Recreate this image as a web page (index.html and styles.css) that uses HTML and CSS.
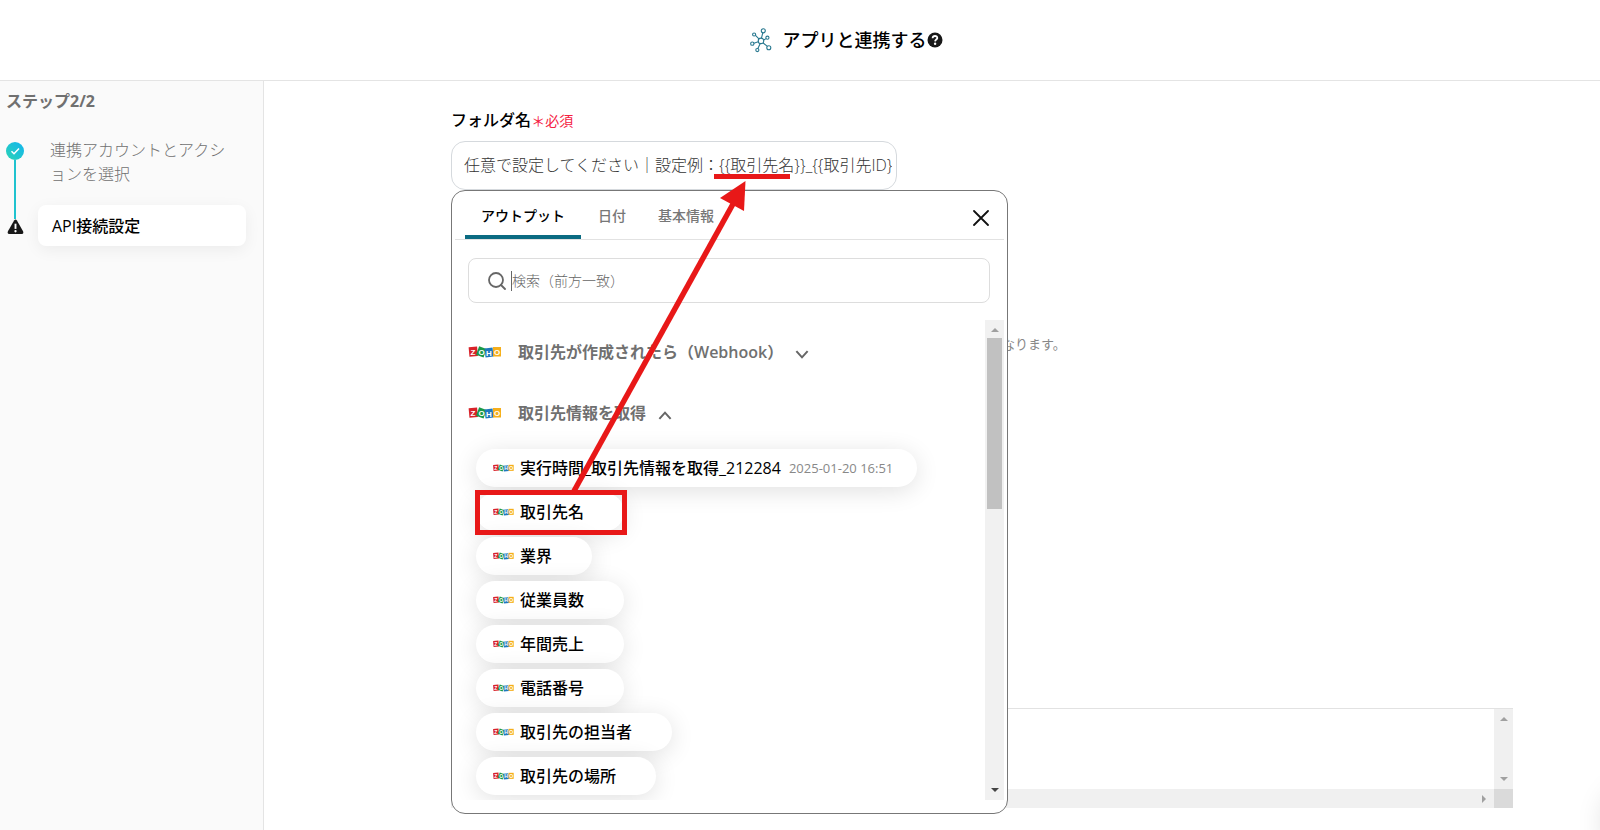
FILE: index.html
```html
<!DOCTYPE html>
<html lang="ja">
<head>
<meta charset="utf-8">
<meta name="viewport" content="width=device-width, initial-scale=1">
<title>アプリと連携する</title>
<link rel="stylesheet" href="styles.css">
</head>
<body>
<svg class="defs" aria-hidden="true">
  <symbol id="zoho" viewBox="0 0 66 24">
    <rect x="1" y="2" width="17" height="19" fill="#d8232a" transform="rotate(-5 9 11)"/>
    <rect x="18" y="3" width="16" height="18" fill="#1a9a48" transform="rotate(20 26 11)"/>
    <rect x="33" y="4" width="16" height="18" fill="#1e78bd" transform="rotate(-6 41 12)"/>
    <rect x="49" y="2" width="16" height="19" fill="#f5ae1b"/>
    <g class="logo-letters">
      <text x="9" y="17">Z</text><text x="26" y="18">O</text><text x="41" y="19">H</text><text x="57" y="18">O</text>
    </g>
  </symbol>
  <symbol id="tri-up" viewBox="0 0 8 8"><path d="M0 6L4 2L8 6Z" fill="currentColor"/></symbol>
  <symbol id="tri-down" viewBox="0 0 8 8"><path d="M0 2L4 6L8 2Z" fill="currentColor"/></symbol>
  <symbol id="tri-right" viewBox="0 0 8 8"><path d="M2 0L6 4L2 8Z" fill="currentColor"/></symbol>
</svg>

<header class="header">
  <svg class="header-icon" viewBox="0 0 24 26" aria-hidden="true">
    <g fill="none" stroke="#28788f" stroke-width="1.2">
      <circle cx="12" cy="14" r="3"/>
      <circle cx="14.500" cy="3" r="2.200"/><circle cx="4.500" cy="7" r="1.700"/>
      <circle cx="19" cy="10.500" r="1.700"/><circle cx="2.500" cy="17" r="1.800"/>
      <circle cx="8" cy="24" r="1.700"/><circle cx="20.500" cy="21.500" r="2.200"/>
      <path d="M12.500 11L14 5M6 8L10 12M15 13L17.500 11.500M9 15L4.200 16.500M11 17L8.500 22.500M14 16L19 20"/>
    </g>
  </svg>
  <h1 class="header-title">アプリと連携する</h1>
  <button class="help" type="button" aria-label="ヘルプ">
    <svg viewBox="0 0 16 16" aria-hidden="true"><circle cx="8" cy="8" r="7.500" fill="#181818"/><path d="M5.600 6.200C5.800 3.200 10.400 3.300 10.300 6.100C10.200 7.600 8.200 7.600 8.100 9.400" fill="none" stroke="#fff" stroke-width="1.800"/><circle cx="8.100" cy="11.800" r="1.200" fill="#fff"/></svg>
  </button>
</header>

<div class="layout">
  <aside class="sidebar">
    <h2 class="step-count">ステップ2/2</h2>
    <div class="steps">
      <div class="rail" aria-hidden="true">
        <svg class="check" viewBox="0 0 18 18"><defs><linearGradient id="g" x1="0" y1="1" x2="1" y2="0"><stop offset="0" stop-color="#2bd4b4"/><stop offset="1" stop-color="#12b4f0"/></linearGradient></defs><circle cx="9" cy="9" r="9" fill="url(#g)"/><path d="M5.500 9.300L8 11.700L13 6.500" fill="none" stroke="#fff" stroke-width="1.500"/></svg>
        <span class="rail-line"></span>
        <svg class="warn" viewBox="0 0 18 16"><path d="M7.500 1Q9 -.8 10.500 1L17 12.500Q18 15.500 15.500 15.500H2.500Q0 15.500 1 12.500Z" fill="#181818"/><path d="M9 4.500V10" stroke="#fff" stroke-width="2"/><circle cx="9" cy="12.500" r="1.200" fill="#fff"/></svg>
      </div>
      <nav class="step-list">
        <a class="step" href="#account">連携アカウントとアクションを選択</a>
        <a class="step step-current" href="#api" aria-current="step">API接続設定</a>
      </nav>
    </div>
  </aside>

  <main class="main">
    <div class="field">
      <label class="field-label" for="folder">フォルダ名 <span class="required">＊必須</span></label>
      <input class="field-input" id="folder" type="text" value="任意で設定してください｜設定例：{{取引先名}}_{{取引先ID}">

      <section class="popover" aria-label="アウトプットの選択">
        <div class="tabs">
          <button class="tab tab-active" type="button">アウトプット</button>
          <button class="tab" type="button">日付</button>
          <button class="tab" type="button">基本情報</button>
          <button class="close" type="button" aria-label="閉じる"><svg viewBox="0 0 16 16" aria-hidden="true"><path d="M1 1L15 15M15 1L1 15" stroke="#111" stroke-width="1.800" stroke-linecap="round"/></svg></button>
        </div>
        <div class="search">
          <svg class="search-icon" viewBox="0 0 18 18" aria-hidden="true"><g fill="none" stroke="#666" stroke-width="1.800" stroke-linecap="round"><circle cx="8" cy="8" r="7"/><path d="M13 13L17 17"/></g></svg>
          <span class="caret"></span>
          <input class="search-input" type="text" placeholder="検索（前方一致）" aria-label="検索（前方一致）">
        </div>
        <div class="results">
          <div class="list">
            <button class="group" type="button"><svg class="logo"><use href="#zoho"/></svg><span>取引先が作成されたら（Webhook）</span><svg class="chevron" viewBox="0 0 12 8"><path d="M1 1L6 6.500L11 1" fill="none" stroke="#666" stroke-width="1.800"/></svg></button>
            <button class="group" type="button"><svg class="logo"><use href="#zoho"/></svg><span>取引先情報を取得</span><svg class="chevron" viewBox="0 0 12 8"><path d="M1 7L6 1.500L11 7" fill="none" stroke="#666" stroke-width="1.800"/></svg></button>
            <div class="pills">
              <button class="pill" type="button"><svg class="logo-small"><use href="#zoho"/></svg>実行時間_取引先情報を取得_212284<time class="stamp">2025-01-20 16:51</time></button>
              <button class="pill" type="button"><svg class="logo-small"><use href="#zoho"/></svg>取引先名</button>
              <button class="pill" type="button"><svg class="logo-small"><use href="#zoho"/></svg>業界</button>
              <button class="pill" type="button"><svg class="logo-small"><use href="#zoho"/></svg>従業員数</button>
              <button class="pill" type="button"><svg class="logo-small"><use href="#zoho"/></svg>年間売上</button>
              <button class="pill" type="button"><svg class="logo-small"><use href="#zoho"/></svg>電話番号</button>
              <button class="pill" type="button"><svg class="logo-small"><use href="#zoho"/></svg>取引先の担当者</button>
              <button class="pill" type="button"><svg class="logo-small"><use href="#zoho"/></svg>取引先の場所</button>
            </div>
          </div>
          <div class="scrollbar" aria-hidden="true">
            <svg class="tri"><use href="#tri-up"/></svg>
            <span class="thumb"></span>
            <svg class="tri tri-dark"><use href="#tri-down"/></svg>
          </div>
        </div>
      </section>

      <svg class="annotation" viewBox="451 108 360 440" aria-hidden="true">
        <g fill="none" stroke="#e81818">
          <path d="M714 176.500H790" stroke-width="5"/>
          <path d="M574 491L733 204" stroke-width="5.500"/>
          <rect x="477.500" y="492.500" width="147" height="40" stroke-width="5"/>
        </g>
        <path d="M745.500 181L720 198L744 211Z" fill="#e81818"/>
      </svg>
    </div>

    <p class="hint">なります。</p>

    <div class="output">
      <div class="output-body"></div>
      <div class="output-vbar" aria-hidden="true"><svg class="tri"><use href="#tri-up"/></svg><svg class="tri"><use href="#tri-down"/></svg></div>
      <div class="output-hbar" aria-hidden="true"><svg class="tri"><use href="#tri-right"/></svg></div>
      <div class="output-corner"></div>
    </div>
  </main>
</div>
<div class="edge-glow" aria-hidden="true"></div>
</body>
</html>
```
FILE: styles.css
```css
* { box-sizing: border-box; }

body {
  margin: 0;
  min-height: 100vh;
  display: flex;
  flex-direction: column;
  overflow: hidden;
  background: #fff;
  color: #000;
  font: 16px/24px "Open Sans", "Noto Sans CJK JP", sans-serif;
}

button, input { font: inherit; color: inherit; }
button { padding: 0; border: 0; background: none; cursor: pointer; }
svg { display: block; }
.defs { display: none; }

.logo-letters text {
  fill: #fff;
  font: bold 16px "Liberation Sans", sans-serif;
  text-anchor: middle;
}

/* Header */
.header {
  display: flex;
  align-items: center;
  justify-content: center;
  height: 81px;
  padding-left: 92px;
  border-bottom: 1px solid #e4e4e4;
}
.header-icon { width: 22px; height: 26px; margin-right: 11px; }
.header-title { margin: 0; font-size: 18px; font-weight: 500; }
.help svg { width: 16px; height: 16px; }

.layout { display: flex; flex: 1; }

/* Steps */
.sidebar {
  width: 264px;
  flex: none;
  padding: 8px 17px 0 6px;
  border-right: 1px solid #e4e4e4;
  background: #fafafa;
}
.step-count { margin: 0; font-size: 16px; font-weight: 700; color: #707070; }
.steps { display: flex; margin-top: 25px; }
.rail {
  display: flex;
  flex-direction: column;
  align-items: center;
  width: 18px;
  margin: 4px 14px 11px 0;
}
.check { width: 18px; height: 18px; }
.rail-line { flex: 1; width: 2px; background: #1fc3cf; }
.warn { width: 17px; height: 16px; }
.step-list { flex: 1; }
.step {
  display: block;
  padding: 0 12px;
  color: #707070;
  font-weight: 300;
  text-decoration: none;
}
.step-current {
  margin-top: 19px;
  padding: 9px 14px 8px;
  border-radius: 8px;
  background: #fff;
  box-shadow: 0 4px 16px rgba(0, 0, 0, .06);
  color: #000;
  font-weight: 500;
}

/* Form */
.main { flex: 1; padding: 27px 87px 22px 187px; }
.field { position: relative; }
.field-label { display: block; font-weight: 500; }
.required { margin-left: -4px; color: #f5203f; font-size: 14px; font-weight: 400; }
.field-input {
  display: block;
  width: 446px;
  height: 49px;
  margin-top: 8px;
  padding: 0 4px 4px 12px;
  border: 1px solid #d5d9dd;
  border-radius: 14px;
  background: #fff;
  color: #333;
  font-weight: 300;
  outline: 0;
}
.hint {
  margin: 144px 0 0 551px;
  color: #888;
  font-size: 13px;
  line-height: 20px;
}
.output {
  display: grid;
  grid-template: 1fr 19px / 1fr 19px;
  height: 100px;
  margin-top: 354px;
  border-top: 1px solid #e2e2e2;
}
.output-vbar {
  display: flex;
  flex-direction: column;
  align-items: center;
  justify-content: space-between;
  padding: 6px 0;
  background: #f0f0f0;
}
.output-hbar {
  display: flex;
  align-items: center;
  justify-content: flex-end;
  padding-right: 6px;
  background: #f0f0f0;
}
.output-corner { background: #dadada; }
.tri { width: 8px; height: 8px; color: #a0a0a0; }
.tri-dark { color: #444; }

/* Picker */
.popover {
  position: absolute;
  top: 100%;
  left: 0;
  width: 557px;
  padding: 0 3px 13px;
  border: 1px solid #777;
  border-radius: 14px;
  background: #fff;
}
.tabs {
  display: flex;
  align-items: stretch;
  height: 49px;
  padding: 0 15px 0 10px;
  border-bottom: 1px solid #e2e2e2;
}
.tab {
  padding: 5px 13px 0;
  border-bottom: 4px solid transparent;
  color: #777;
  font-size: 14px;
  font-weight: 500;
}
.tab-active {
  padding: 5px 16px 0;
  margin-right: 4px;
  border-color: #0b6b82;
  border-radius: 3px 3px 0 0;
  color: #000;
}
.tab + .tab:not(:nth-child(2)) { margin-left: 6px; }
.close { margin-left: auto; padding-top: 5px; }
.close svg { width: 16px; height: 16px; }
.search {
  display: flex;
  align-items: center;
  height: 45px;
  margin: 18px 14px 17px 13px;
  padding: 0 19px;
  border: 1px solid #ddd;
  border-radius: 8px;
}
.search-icon { width: 18px; height: 18px; margin-right: 5px; }
.caret { width: 1px; height: 20px; background: #666; }
.search-input {
  flex: 1;
  min-width: 0;
  height: 40px;
  padding: 0;
  border: 0;
  outline: 0;
  background: none;
  font-size: 14px;
  font-weight: 300;
}
.search-input::placeholder { color: #666; opacity: 1; }
.results { display: flex; height: 480px; }
.list { flex: 1; padding: 1px 0 0 13px; overflow: hidden; }
.group {
  display: flex;
  align-items: center;
  height: 61px;
  color: #707070;
  font-weight: 600;
}
.logo { width: 34px; height: 12px; margin-right: 16px; }
.chevron { width: 14px; height: 9px; margin: 5px 0 0 12px; }
.pills {
  display: flex;
  flex-direction: column;
  align-items: flex-start;
  gap: 6px;
  padding: 6px 8px 0;
}
.pill {
  display: flex;
  align-items: center;
  height: 38px;
  padding: 0 40px 0 17px;
  border-radius: 19px;
  background: #fff;
  box-shadow: 0 4px 24px rgba(0, 0, 0, .12);
  font-weight: 500;
  white-space: nowrap;
}
.pill:first-child { padding-right: 24px; }
.logo-small { width: 21px; height: 8px; margin-right: 6px; }
.stamp { margin-left: 8px; color: #888; font-size: 13px; font-weight: 400; }
.scrollbar {
  display: flex;
  flex-direction: column;
  align-items: center;
  width: 19px;
  padding: 6px 0;
  background: #f1f1f1;
}
.thumb { width: 15px; height: 171px; margin-top: 4px; background: #c1c1c1; }
.scrollbar .tri-dark { margin-top: auto; }

/* Callout drawn over the form */
.annotation {
  position: absolute;
  top: 0;
  left: 0;
  width: 360px;
  height: 440px;
  pointer-events: none;
}

.edge-glow {
  position: fixed;
  right: -72px;
  bottom: -24px;
  width: 64px;
  height: 64px;
  border-radius: 50%;
  box-shadow: 0 0 32px rgba(0, 0, 0, .2);
}
```
